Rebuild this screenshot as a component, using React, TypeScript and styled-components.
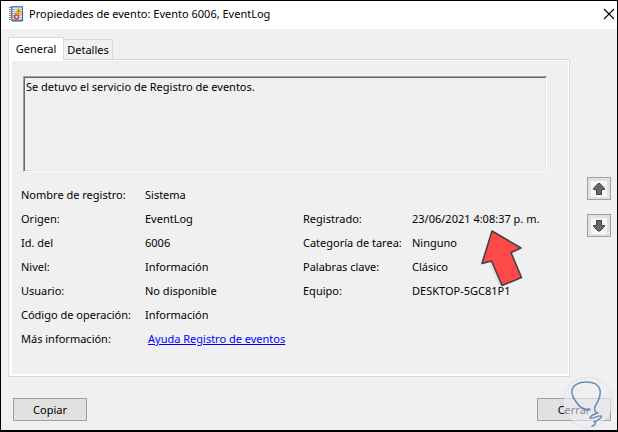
import React from 'react';
import styled, { createGlobalStyle } from 'styled-components';

const GlobalStyle = createGlobalStyle`
  *, *::before, *::after { box-sizing: border-box; }
  body {
    margin: 0;
    background: #f0f0f0;
    color: #000;
    font: 11px/16px 'Noto Sans', sans-serif;
  }
  button { font: inherit; color: inherit; padding: 0; margin: 0; }
`;

const Window = styled.main`
  display: flex;
  flex-direction: column;
  min-height: 100vh;
  border: 1px solid #000;
  border-bottom-width: 2px;
  background: #f0f0f0;
`;

const TitleBar = styled.header`
  display: flex;
  align-items: center;
  height: 28px;
  padding: 0 2px 2px 8px;
  background: #fff;
`;

const Title = styled.h1`
  flex: 1;
  margin: 0 0 0 5px;
  font-size: 11px;
  font-weight: 400;
  white-space: nowrap;
`;

const CloseButton = styled.button`
  display: flex;
  border: 0;
  background: none;
`;

const Body = styled.div`
  display: flex;
  flex: 1;
  align-items: stretch;
  gap: 17px;
  padding: 8px 6px 0 7px;
`;

const TabView = styled.section`
  display: flex;
  flex: 1;
  flex-direction: column;
  min-width: 0;
`;

const TabList = styled.div`
  display: flex;
  align-items: flex-end;
  height: 22px;
`;

const Tab = styled.button<{ $active?: boolean }>`
  width: ${({ $active }) => ($active ? 56 : 49)}px;
  height: ${({ $active }) => ($active ? 23 : 20)}px;
  align-self: ${({ $active }) => ($active ? 'flex-start' : 'flex-end')};
  position: relative;
  z-index: ${({ $active }) => ($active ? 1 : 0)};
  border: 1px solid #d9d9d9;
  border-left-width: ${({ $active }) => ($active ? 1 : 0)}px;
  border-bottom: 0;
  background: ${({ $active }) => ($active ? '#fff' : '#f0f0f0')};
`;

const Panel = styled.div`
  flex: 1;
  padding: 16px 22px 23px 11px;
  border: 1px solid #d9d9d9;
  box-shadow: inset 3px 0 #fff, inset -1px 0 #fff, inset 0 1px #fff, inset 0 -2px #fff;
`;

const Message = styled.div`
  height: 96px;
  margin: 0 0 11px 3px;
  padding: 1px;
  border: 1px solid;
  border-color: #a0a0a0 #fff #fff #a0a0a0;
  box-shadow: inset 1px 1px #696969, inset -1px -1px #e3e3e3;
`;

const MessageText = styled.p`
  margin: 0;
  padding: 1px;
`;

const Details = styled.dl`
  display: grid;
  grid-template-columns: 124px 158px 109px 1fr;
  grid-auto-rows: 24px;
  align-items: center;
  margin: 0;
  padding-left: 1px;
  white-space: nowrap;
`;

const Label = styled.dt<{ $second?: boolean }>`
  grid-column: ${({ $second }) => ($second ? 3 : 1)};
`;

const Value = styled.dd`
  position: relative;
  margin: 0;
`;

const HelpLink = styled.a`
  margin-left: 3px;
  color: #00f;
`;

const Pointer = styled.svg`
  position: absolute;
  z-index: 1;
  top: 16px;
  left: 67px;
`;

const Navigation = styled.nav`
  display: flex;
  flex-direction: column;
  justify-content: center;
  gap: 14px;
`;

const NavButton = styled.button`
  display: grid;
  place-items: center;
  width: 24px;
  height: 23px;
  border: 1px solid #a0a0a0;
  background: #e1e1e1;
`;

const Footer = styled.footer`
  position: relative;
  display: flex;
  justify-content: space-between;
  padding: 21px 6px 9px 12px;
`;

const ActionButton = styled.button`
  width: 74px;
  height: 23px;
  border: 1px solid #a0a0a0;
  background: #e1e1e1;
`;

const Watermark = styled.svg`
  position: absolute;
  right: 2px;
  bottom: 0;
  pointer-events: none;
`;

const EventIcon = () => (
  <svg width="15" height="16" viewBox="0 0 15 16" aria-hidden="true">
    <path d="M2.5.5h11v14h-11z" fill="#9fbfe4" stroke="#5d7fb0" />
    <path d="M13.5 1v14H3" fill="none" stroke="#3f5f9c" />
    <path d="M4 2.5h9M4 4.5h9M4 6.5h9M4 8.5h9M4 10.5h9M4 12.5h9" stroke="#dfebf8" />
    <path d="M0 1.5h4M0 3.5h4M0 5.5h4M0 7.5h4M0 9.5h4M0 11.5h4M0 13.5h4" stroke="#858585" />
    <path d="M9.500 2l3 6h-6z" fill="#ffc922" stroke="#e0a80f" strokeWidth=".8" />
    <path d="M9.500 4v2M9.500 6.700v.8" stroke="#604000" strokeWidth=".8" />
    <circle cx="7.500" cy="10.800" r="2" fill="#f7dddd" stroke="#d94339" strokeWidth="1.6" />
  </svg>
);

const NavArrow = ({ down = false }: { down?: boolean }) => (
  <svg width="16" height="16" viewBox="0 0 16 16" aria-hidden="true">
    <path d="M0 0h16v16H0z" fill="#f7f7f7" />
    <path
      d={
        down
          ? 'M5.5 2.5h5v5h3v1l-4.500 4.500h-2l-4.500-4.500v-1h3z'
          : 'M5.5 13.5h5v-5h3v-1L9 2.500H7L2.5 7.5v1h3z'
      }
      fill="#686868"
      stroke="#414141"
      strokeLinejoin="round"
    />
  </svg>
);

type Field = { label: string; value: React.ReactNode; second?: boolean };

const fields: Field[] = [
  { label: 'Nombre de registro:', value: 'Sistema' },
  { label: 'Origen:', value: 'EventLog' },
  {
    label: 'Registrado:',
    second: true,
    value: (
      <>
        23/06/2021 4:08:37 p. m.
        <Pointer width="46" height="62" viewBox="0 0 46 62" aria-hidden="true">
          <path d="M11 8 1 38l9-2 10 24 20-7-10-25 9-3z" fill="#777" opacity=".1" />
          <path
            d="M13 4 42 21 32 25.500 42.500 50.500 23 58.500 12.500 34 3 36.500Z"
            fill="#ff4848"
            stroke="#444"
            strokeWidth="1.6"
            strokeLinejoin="round"
          />
        </Pointer>
      </>
    ),
  },
  { label: 'Id. del', value: '6006' },
  { label: 'Categoría de tarea:', value: 'Ninguno', second: true },
  { label: 'Nivel:', value: 'Información' },
  { label: 'Palabras clave:', value: 'Clásico', second: true },
  { label: 'Usuario:', value: 'No disponible' },
  { label: 'Equipo:', value: 'DESKTOP-5GC81P1', second: true },
  { label: 'Código de operación:', value: 'Información' },
  { label: 'Más información:', value: <HelpLink href="#ayuda">Ayuda Registro de eventos</HelpLink> },
];

export default function App() {
  return (
    <>
      <GlobalStyle />
      <Window>
        <TitleBar>
          <EventIcon />
          <Title>Propiedades de evento: Evento 6006, EventLog</Title>
          <CloseButton type="button" aria-label="Cerrar ventana">
            <svg width="12" height="12" viewBox="0 0 12 12" aria-hidden="true">
              <path d="m1 1 10 10M11 1 1 11" stroke="#000" strokeWidth="1.1" />
            </svg>
          </CloseButton>
        </TitleBar>
        <Body>
          <TabView>
            <TabList role="tablist">
              <Tab type="button" role="tab" aria-selected="true" aria-controls="general" id="tab-general" $active>
                General
              </Tab>
              <Tab type="button" role="tab" aria-selected="false">
                Detalles
              </Tab>
            </TabList>
            <Panel role="tabpanel" id="general" aria-labelledby="tab-general">
              <Message>
                <MessageText>Se detuvo el servicio de Registro de eventos.</MessageText>
              </Message>
              <Details>
                {fields.map(({ label, value, second }) => (
                  <React.Fragment key={label}>
                    <Label $second={second}>{label}</Label>
                    <Value>{value}</Value>
                  </React.Fragment>
                ))}
              </Details>
            </Panel>
          </TabView>
          <Navigation aria-label="Eventos">
            <NavButton type="button" aria-label="Evento anterior">
              <NavArrow />
            </NavButton>
            <NavButton type="button" aria-label="Evento siguiente">
              <NavArrow down />
            </NavButton>
          </Navigation>
        </Body>
        <Footer>
          <ActionButton type="button">Copiar</ActionButton>
          <ActionButton type="button">Cerrar</ActionButton>
          <Watermark width="54" height="54" viewBox="0 0 54 54" aria-hidden="true">
            <circle cx="27" cy="26.500" r="26" fill="#9fb0c8" opacity=".16" />
            <circle cx="27" cy="26.500" r="24.500" fill="#fafafa" opacity=".5" />
            <path
              d="M29 34c-5 0-10-2-13-7-3-4-6-8-5-13 1-5 7-8 14-8 8 0 13 3 14 8 1 6-1 9-3 13-2 3-3 6-2 8 1 2 2 1 3 2-3 1-7 2-8 5 4 1 8-3 11-2 2 1-4 5-7 6 3 1 1 3-2 4"
              fill="none"
              stroke="#5279b5"
              strokeWidth="1.500"
              strokeLinecap="round"
              strokeLinejoin="round"
              opacity=".85"
            />
          </Watermark>
        </Footer>
      </Window>
    </>
  );
}
